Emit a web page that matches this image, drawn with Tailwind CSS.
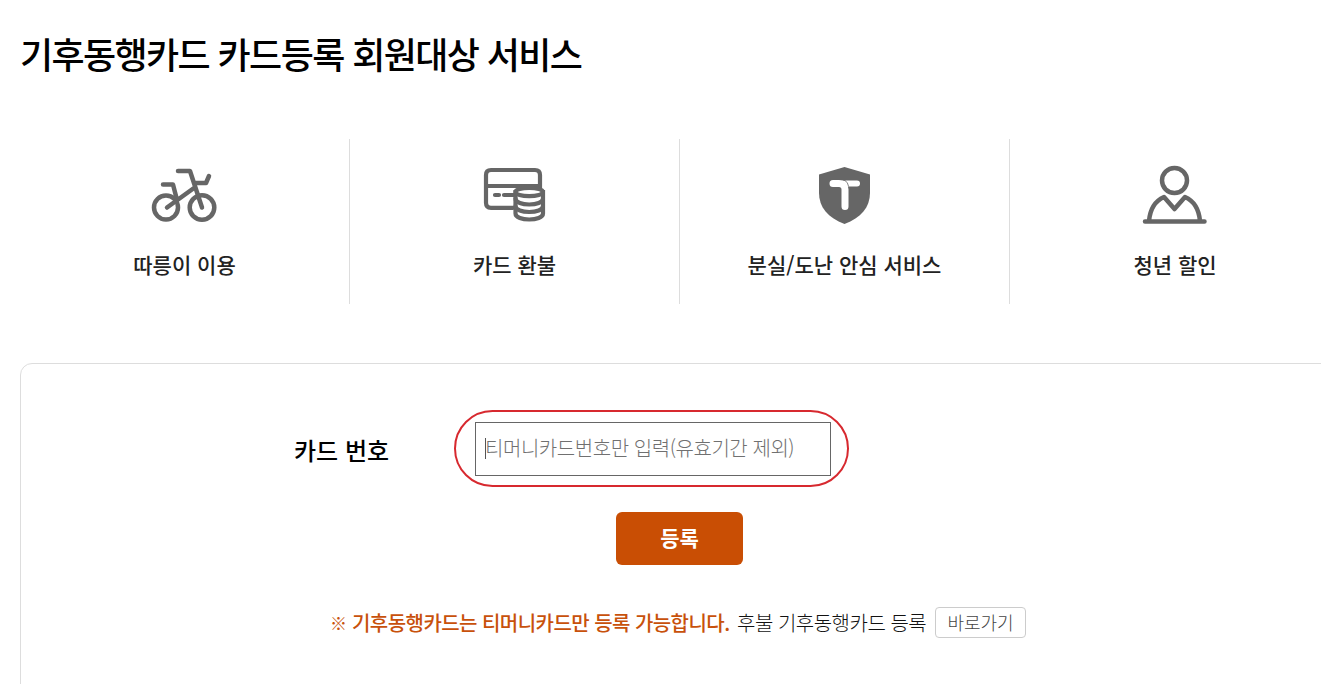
<!DOCTYPE html>
<html lang="ko">
<head>
  <meta charset="UTF-8" />
  <meta name="viewport" content="width=device-width, initial-scale=1.0"/>
  <title>기후동행카드 카드등록</title>
  <script src="https://cdn.jsdelivr.net/npm/@tailwindcss/browser@4"></script>
</head>
<body class="bg-white font-['Noto_Sans_CJK_KR',sans-serif] text-black overflow-hidden">

  <div class="w-[1360px] h-[684px] px-5 overflow-hidden">
    <h1 class="pt-[27px] h-[139px] text-[36px] leading-[52px] font-medium tracking-[-1.6px] whitespace-nowrap">기후동행카드 카드등록 회원대상 서비스</h1>

    <!-- Services -->
    <ul class="grid grid-cols-4 h-[165px] text-center text-[21px] leading-8 font-medium text-[#222]">
      <li class="border-r border-[#ddd] pt-5">
        <svg class="mx-auto w-[90px] h-[80px]" viewBox="0 0 90 80" fill="none" stroke="#666" stroke-width="4.5" stroke-linecap="round" stroke-linejoin="round">
          <circle cx="26" cy="48.5" r="12"/>
          <circle cx="62" cy="48.5" r="12.3"/>
          <path d="M27 48.500L54 29M37 41L33 25.500H23M38 12H50L62 48.500M54 24H66L69 17"/>
        </svg>
        <p class="mt-[9px]">따릉이 이용</p>
      </li>
      <li class="border-r border-[#ddd] pt-5">
        <svg class="mx-auto w-[90px] h-[80px]" viewBox="0 4 90 80" fill="none" stroke="#666" stroke-width="4.2" stroke-linecap="round">
          <path d="M43 52.800H21Q16 52.800 16 47.800V20Q16 15 21 15H65Q70 15 70 20V34M16 31H70M25 40H29M34 40H44"/>
          <path d="M45.500 37V58.500C45.500 66.500 73 66.500 73 58.500V37Z" fill="#fff"/>
          <ellipse cx="59.200" cy="37" rx="13.700" ry="4.200" fill="#fff"/>
          <path d="M45.500 43.500C45.500 51.500 73 51.500 73 43.500M45.500 51C45.500 59 73 59 73 51"/>
        </svg>
        <p class="mt-[9px]">카드 환불</p>
      </li>
      <li class="border-r border-[#ddd] pt-5">
        <svg class="mx-auto w-[90px] h-[80px]" viewBox="0 4 90 80" fill="none" stroke="#fff" stroke-width="6" stroke-linecap="round" stroke-linejoin="round">
          <path d="M44.500 12L70 19.500V38C70 52 61 63 44.500 69C28 63 19 52 19 38V19.500Z" fill="#666" stroke="none"/>
          <path d="M33 28.500H39Q45 28.500 45 34.500V51.500" stroke-width="7"/>
          <path d="M46 28.500H57"/>
          <path d="M45 25.500Q48 27 48.500 31" stroke="#666" stroke-width="0.8"/>
        </svg>
        <p class="mt-[9px]">분실/도난 안심 서비스</p>
      </li>
      <li class="pt-5">
        <svg class="mx-auto w-[90px] h-[80px]" viewBox="0 4 90 80" fill="none" stroke="#666" stroke-width="4.500" stroke-linecap="round" stroke-linejoin="round">
          <circle cx="44.500" cy="25.500" r="12.500"/>
          <path d="M15 66.500H74.500M19 66C20 55 25 46 34 42L44.500 54L55 42C64 46 69 55 70 66"/>
        </svg>
        <p class="mt-[9px]">청년 할인</p>
      </li>
    </ul>

    <!-- Card register -->
    <div class="mt-[59px] h-[400px] border border-[#ddd] rounded-xl pt-[46px]">
      <div class="flex items-center pl-[273px]">
        <label for="cardNo" class="w-[160px] pt-0.5 text-[24px] leading-9 font-medium">카드 번호</label>
        <div class="w-[395px] h-[77px] border-2 border-[#d7292f] rounded-[40px] px-[19px] py-[10px]">
          <div class="relative">
            <input id="cardNo" type="text" placeholder="티머니카드번호만 입력(유효기간 제외)" class="block w-[356px] h-[54px] border border-[#666] pl-[9px] pb-1 text-[20px] font-light tracking-[-0.45px] placeholder:text-[#707070]" />
            <span class="absolute left-[10px] top-4 w-px h-[21px] bg-[#555]"></span>
          </div>
        </div>
      </div>
      <button type="button" class="block mt-[25px] ml-[595px] w-[127px] h-[53px] pb-0.5 rounded-md bg-[#c94e04] text-white text-[21px] font-bold">등록</button>
      <p class="flex items-center h-[31px] mt-[42px] ml-[309px] text-[20px] leading-[31px] whitespace-nowrap">
        <strong class="flex w-[407px] font-medium tracking-[-0.55px] text-[#c8510b]"><span class="w-[22px] text-[17px] font-bold">※</span>기후동행카드는 티머니카드만 등록 가능합니다.</strong>
        <span class="w-[198px] font-light tracking-[-0.5px] text-[#111]">후불 기후동행카드 등록</span>
        <a href="#" class="flex items-center justify-center w-[91px] h-[31px] pb-px border border-[#ccc] rounded text-[18px] font-light text-[#444]">바로가기</a>
      </p>
    </div>
  </div>

</body>
</html>
